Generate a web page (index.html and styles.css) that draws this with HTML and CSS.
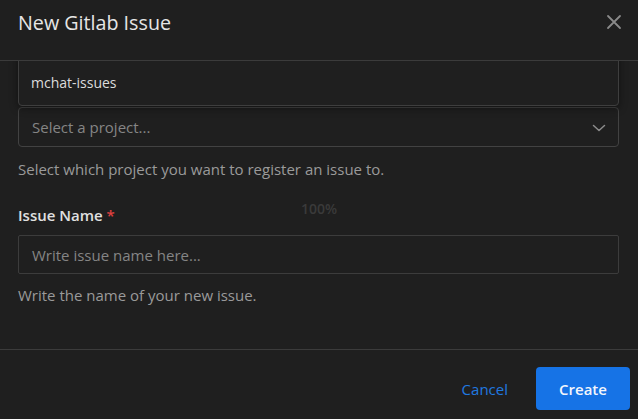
FILE: index.html
```html
<!DOCTYPE html>
<html>
<head>
<meta charset="utf-8">
<link rel="stylesheet" href="styles.css">
</head>
<body>
<div class="modal">
  <div class="header">
    <h1 class="title">New Gitlab Issue</h1>
    <button class="close" aria-label="Close">
      <svg width="16" height="16" viewBox="0 0 16 16"><path d="M2 2L14 14M14 2L2 14" stroke="#8a8a8a" stroke-width="1.8" stroke-linecap="round"/></svg>
    </button>
  </div>
  <div class="body">
    <div class="select-wrap">
      <div class="menu">
        <div class="menu-item">mchat-issues</div>
      </div>
      <div class="select">
        <span class="placeholder">Select a project...</span>
        <svg class="chevron" width="14" height="10" viewBox="0 0 14 10"><path d="M1.5 2.5L7 7.5L12.5 2.5" stroke="#8c8c8c" stroke-width="1.5" fill="none" stroke-linecap="round" stroke-linejoin="round"/></svg>
      </div>
    </div>
    <p class="help">Select which project you want to register an issue to.</p>
    <label class="label">Issue Name <span class="req">*</span></label>
    <div class="input"><span class="placeholder">Write issue name here...</span></div>
    <p class="help">Write the name of your new issue.</p>
  </div>
  <div class="footer">
    <button class="btn-link">Cancel</button>
    <button class="btn-primary">Create</button>
  </div>
  <div class="zoom">100%</div>
</div>
</body>
</html>
```
FILE: styles.css
```css
* { box-sizing: border-box; }
html, body { margin: 0; padding: 0; background: #1f1f1f; }
body { font-family: "Open Sans", "Noto Sans", sans-serif; color: #dddddd; }
.modal { width: 638px; height: 419px; display: flex; flex-direction: column; position: relative; overflow: hidden; background: #1f1f1f; }
.header { height: 61px; flex: none; display: flex; align-items: center; justify-content: space-between; padding: 0 14px 0 18px; border-bottom: 1px solid #3b3b3b; position: relative; z-index: 2; background: #1f1f1f; }
.title { margin: 0; font-size: 19.7px; font-weight: 500; color: #e6e6e6; line-height: 26px; margin-top: -14px; }
.close { background: none; border: 0; padding: 0; width: 20px; height: 20px; display: flex; align-items: center; justify-content: center; margin-top: -16px; }
.body { flex: 1; padding: 46px 19px 0 18px; position: relative; }
.select-wrap { position: relative; }
.menu { position: absolute; left: 0; right: 0; bottom: calc(100% + 1px); height: 64px; background: #1f1f1f; border: 1px solid #3e3e3e; border-radius: 4px; box-shadow: 0 2px 8px rgba(0,0,0,0.45); display: flex; align-items: flex-end; }
.menu-item { height: 46px; width: 100%; display: flex; align-items: center; padding-left: 12px; font-size: 14px; color: #dcdcdc; }
.select { height: 40px; border: 1px solid #424242; border-radius: 4px; display: flex; align-items: center; justify-content: space-between; padding: 0 12px 0 13px; }
.placeholder { font-size: 15px; color: #858585; line-height: 20px; }
.chevron { margin-top: 1px; }
.help { margin: 12px 0 0; font-size: 15px; line-height: 20px; color: #9a9a9a; }
.label { display: block; margin-top: 26px; font-size: 15px; line-height: 20px; font-weight: 600; color: #e0e0e0; }
.req { color: #e0413f; }
.input { margin-top: 10px; height: 39px; border: 1px solid #3c3c3c; border-radius: 2px; display: flex; align-items: center; padding-left: 13px; }
.input + .help { margin-top: 11px; }
.footer { height: 70px; flex: none; border-top: 1px solid #3b3b3b; display: flex; align-items: center; justify-content: flex-end; padding: 8px 8px 0 0; gap: 28px; }
.btn-link { background: none; border: 0; padding: 0; font-family: inherit; font-size: 15px; font-weight: 500; color: #1f79e0; }
.btn-primary { width: 94px; height: 43px; border: 0; border-radius: 4px; background: #1673e6; color: #f2f6fc; font-family: inherit; font-size: 15px; font-weight: 600; }
.zoom { position: absolute; left: 0; right: 0; top: 199px; text-align: center; font-size: 14px; font-weight: 600; color: #3a3a3a; pointer-events: none; }
```
